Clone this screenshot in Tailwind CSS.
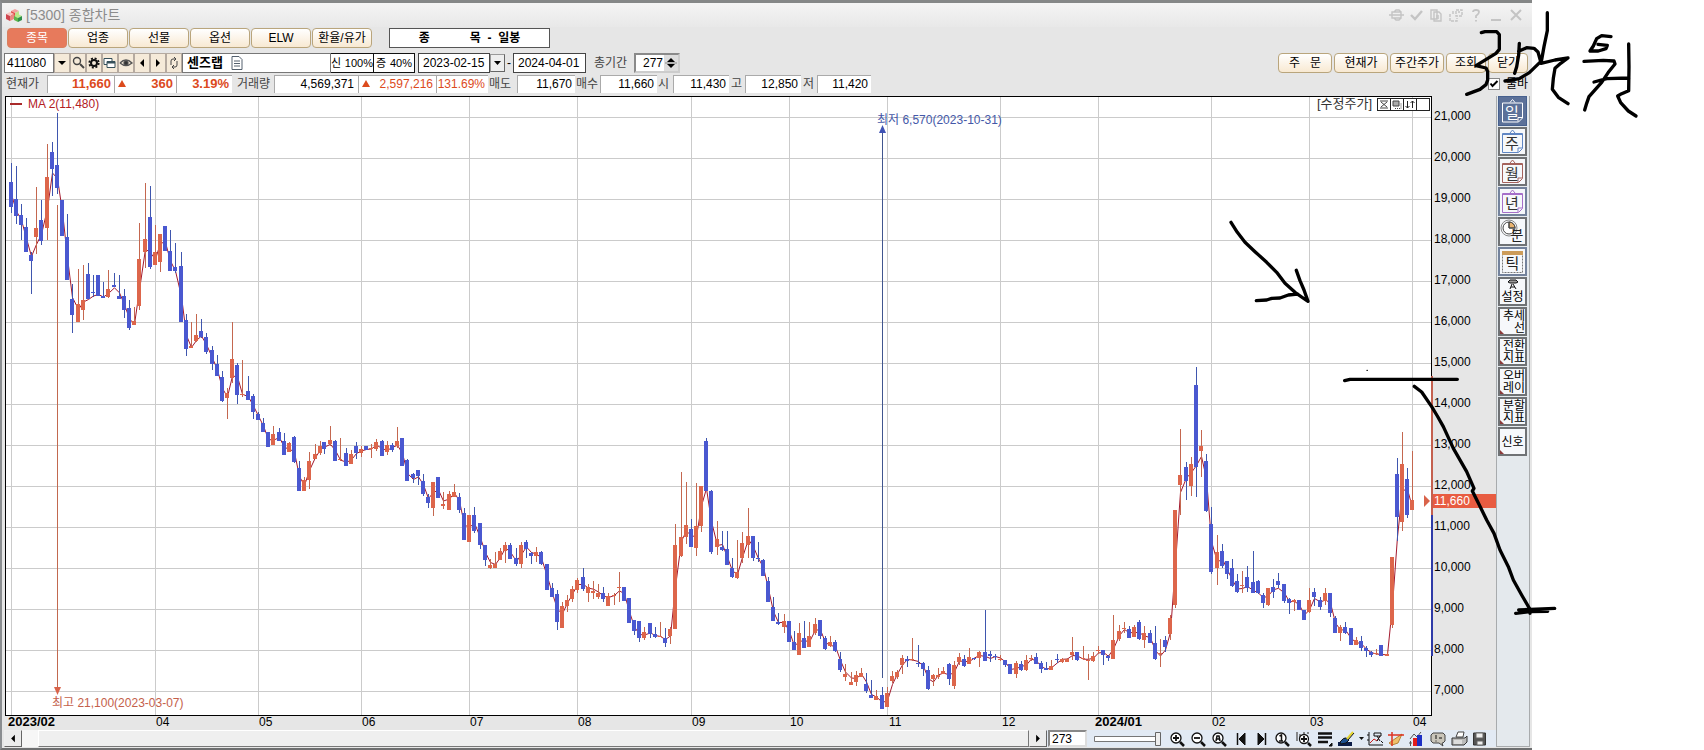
<!DOCTYPE html>
<html lang="ko">
<head>
  <meta charset="UTF-8">
  <meta name="viewport" content="width=device-width, initial-scale=1.0">
  <title>[5300] 종합차트</title>
  <script src="https://cdn.jsdelivr.net/npm/@tailwindcss/browser@4"></script>
</head>
<body class="bg-white text-black text-[12px] leading-4 font-['Liberation_Sans','Noto_Sans_CJK_KR',sans-serif]">

<div class="relative flex">
  <!-- Window -->
  <div class="flex-1 min-w-0 border-t-[3px] border-t-[#858787] border-l-2 border-l-[#8a8d90] border-b-2 border-b-[#6e6f70] bg-[#e6e6e6] pb-px">

    <!-- Title bar -->
    <header class="flex items-center justify-between h-6 pl-1 pr-2 bg-linear-to-b from-[#f4f4f4] to-[#e8e8e8] text-[#8c8c8c]">
      <div class="flex items-center gap-1">
        <svg class="w-4 h-4" viewBox="0 0 16 16">
          <path d="M5 4l4-2 4 2-4 2z" fill="#f3a3a0"/><path d="M5 4l4 2v5l-4-2z" fill="#e24d4a"/><path d="M9 6l4-2v4l-4 3z" fill="#bfe28d"/>
          <path d="M0 7l4-2 4 2-4 2z" fill="#f7c4bf"/><path d="M0 7l4 2v5l-4-2z" fill="#cf4650"/><path d="M4 9l4-2v5l-4 2z" fill="#e98882"/>
          <path d="M8 9l4-2 4 2-4 2z" fill="#b8ec8a"/><path d="M8 9l4 2v4l-4-2z" fill="#5db54a"/><path d="M12 11l4-2v4l-4 2z" fill="#2f8f4a"/>
        </svg>
        <h1 class="text-[14px]">[5300] 종합차트</h1>
      </div>
      <svg class="w-[135px] h-4" viewBox="0 0 135 16" fill="none" stroke="#c4c4c4" stroke-width="1.4">
        <path d="M3 5h9v6H3zM5 5l2-2h3l2 2M5 11l2 2h3l2-2M0 8h15"/>
        <path d="M22 8l4 4 7-8" stroke-width="2.4"/>
        <path d="M42 3h6v9h-6zM45 5h5l2 2v7h-7zM47 9h3M47 11h3"/>
        <path d="M67 3h6v6h-6zM61 7v7h7v-3M64 4v3M69 5h2" stroke-dasharray="3 1"/>
        <path d="M84 5q0-2 3-2t3 2q0 2-3 4v2M87 13v1.5" stroke-width="1.8"/>
        <path d="M102 13h10" stroke-width="2"/>
        <path d="M122 3l10 10M132 3L122 13" stroke-width="2"/>
      </svg>
    </header>

    <!-- Tabs -->
    <nav class="flex items-center gap-px h-5 mt-px pl-[5px] text-[12px]">
      <button class="w-[60px] h-5 rounded-sm border border-[#d9805f] bg-[#e77a5c] text-white">종목</button>
      <button class="w-[60px] h-5 rounded-sm border border-[#b9a57c] bg-linear-to-b from-white to-[#f8e9d2]">업종</button>
      <button class="w-[60px] h-5 rounded-sm border border-[#b9a57c] bg-linear-to-b from-white to-[#f8e9d2]">선물</button>
      <button class="w-[60px] h-5 rounded-sm border border-[#b9a57c] bg-linear-to-b from-white to-[#f8e9d2]">옵션</button>
      <button class="w-[60px] h-5 rounded-sm border border-[#b9a57c] bg-linear-to-b from-white to-[#f8e9d2]">ELW</button>
      <button class="w-[60px] h-5 rounded-sm border border-[#b9a57c] bg-linear-to-b from-white to-[#f8e9d2] whitespace-nowrap">환율/유가</button>
      <div class="flex items-center justify-center w-[161px] h-5 ml-4 border border-[#555] bg-white font-bold whitespace-pre">종            목  -  일봉</div>
    </nav>

    <!-- Search row -->
    <div class="flex items-center h-5 mt-[5px] pl-0.5 pr-1">
      <input aria-label="종목코드" value="411080" class="w-[50px] h-5 pl-0.5 border border-[#777] bg-white">
      <div class="flex text-[#333]">
        <button aria-label="목록" class="w-4 h-5 border border-[#b5aaa0] bg-[#f5ead9]"><svg class="w-full" viewBox="0 0 14 18"><path d="M3 7h8l-4 4z" fill="#000"/></svg></button>
        <button aria-label="검색" class="w-4 h-5 border border-[#b5aaa0] bg-[#f5ead9]"><svg class="w-full" viewBox="0 0 14 18" fill="none" stroke="#444"><circle cx="6" cy="7" r="3.5" stroke-width="1.4"/><path d="M9 10l4 4" stroke-width="2"/></svg></button>
        <button aria-label="설정" class="w-4 h-5 border border-[#b5aaa0] bg-[#f5ead9]"><svg class="w-full" viewBox="0 0 14 18" fill="none" stroke="#111"><circle cx="7" cy="9" r="3" stroke-width="2"/><circle cx="7" cy="9" r="4.7" stroke-width="1.8" stroke-dasharray="2 1.7"/></svg></button>
        <button aria-label="창" class="w-4 h-5 border border-[#b5aaa0] bg-[#f5ead9]"><svg class="w-full" viewBox="0 0 14 18" fill="#fff" stroke="#36505a"><path d="M1 4.500h8v6H1z"/><path d="M4 7.500h8v6H4z"/><path d="M4 8.500h8" stroke-width="2"/></svg></button>
        <button aria-label="보기" class="w-4 h-5 border border-[#b5aaa0] bg-[#f5ead9]"><svg class="w-full" viewBox="0 0 14 18" fill="none" stroke="#555"><path d="M1 9q6-6 12 0q-6 5-12 0" stroke-width="1.4"/><circle cx="7" cy="9" r="2.2" fill="#333"/></svg></button>
        <button aria-label="이전" class="w-4 h-5 border border-[#b5aaa0] bg-[#f5ead9]"><svg class="w-full" viewBox="0 0 14 18"><path d="M9 5v8L5 9z"/></svg></button>
        <button aria-label="다음" class="w-4 h-5 border border-[#b5aaa0] bg-[#f5ead9]"><svg class="w-full" viewBox="0 0 14 18"><path d="M5 5v8l4-4z"/></svg></button>
        <button aria-label="새로고침" class="w-4 h-5 border border-[#b5aaa0] bg-[#f5ead9]"><svg class="w-full" viewBox="0 0 14 18" fill="none" stroke="#444"><path d="M4 11V7q0-2 2-2h2M7 3l2 2-2 2M10 7v4q0 2-2 2H6M7 11l-2 2 2 2"/></svg></button>
      </div>
      <div class="flex items-center gap-2 w-[149px] h-5 pl-1 border border-[#777] bg-white font-bold text-[13px]">
        센즈랩
        <svg class="w-3 h-[14px]" viewBox="0 0 12 14" fill="#fff" stroke="#54606e"><path d="M1 .5h7l3 3v10H1z"/><path d="M3 5h6M3 7.500h6M3 10h6"/></svg>
      </div>
      <div class="flex items-center justify-between w-[42px] h-5 border-y border-[#111] bg-white whitespace-nowrap text-[11px]"><span>신</span><span>100%</span></div>
      <div class="flex items-center justify-between w-[42px] h-5 px-0.5 border border-[#111] bg-white whitespace-nowrap text-[11px]"><span>증</span><span>40%</span></div>
      <input aria-label="시작일" value="2023-02-15" class="w-[72px] h-5 ml-[3px] px-1 border border-[#444] bg-white">
      <button aria-label="시작일 선택" class="w-[15px] h-[18px] border border-r-[#666] border-b-[#666] border-[#999] bg-[#eee]"><svg class="w-full" viewBox="0 0 13 16"><path d="M3 6h7l-3.500 4z"/></svg></button>
      <span class="w-2 text-center">-</span>
      <input aria-label="종료일" value="2024-04-01" class="w-[73px] h-5 px-1 border border-[#444] bg-white">
      <label for="span" class="ml-2 w-10 text-[#444] whitespace-nowrap">총기간</label>
      <div class="flex w-[46px] h-5 border-2 border-[#8a8a8a] border-r-[#ccc] border-b-[#ccc] bg-white">
        <input id="span" value="277" class="min-w-0 flex-1 text-right bg-white">
        <svg class="w-[14px] h-4 ml-px bg-[#ddd]" viewBox="0 0 14 16"><path d="M3 7l4-4 4 4zM3 9h8l-4 4z"/><path d="M1 8h12" stroke="#888"/></svg>
      </div>
      <div class="flex gap-0.5 ml-auto text-[12px] whitespace-nowrap">
        <button class="w-[54px] h-5 rounded-sm border border-[#b9a57c] bg-linear-to-b from-white to-[#f8e9d2] whitespace-pre">주   문</button>
        <button class="w-[54px] h-5 rounded-sm border border-[#b9a57c] bg-linear-to-b from-white to-[#f8e9d2]">현재가</button>
        <button class="w-[54px] h-5 rounded-sm border border-[#b9a57c] bg-linear-to-b from-white to-[#f8e9d2]">주간주가</button>
        <button class="w-10 h-5 rounded-sm border border-[#b9a57c] bg-linear-to-b from-white to-[#f8e9d2]">조회</button>
        <button class="w-10 h-5 rounded-sm border border-[#b9a57c] bg-linear-to-b from-white to-[#f8e9d2]">닫기</button>
      </div>
    </div>

    <!-- Quote row -->
    <div class="flex items-center h-5 mt-px pl-1 pr-1 text-[#444] whitespace-nowrap">
      <span class="w-[41px]">현재가</span>
      <span class="w-[67px] h-[18px] pr-[3px] border-l border-t border-[#aaa] bg-white text-right font-bold text-[13px] text-[#dc4a1c]">11,660</span>
      <span class="flex justify-between w-[62px] h-[18px] px-[3px] border-l border-t border-[#aaa] bg-white font-bold text-[#dc4a1c]"><svg class="w-2 h-4" viewBox="0 0 8 16"><path d="M0 11h8L4 4z" fill="#dc4a1c"/></svg><span class="text-[13px]">360</span></span>
      <span class="w-14 h-[18px] pr-[3px] border-l border-t border-[#aaa] bg-white text-right font-bold text-[13px] text-[#dc4a1c]">3.19%</span>
      <span class="w-[42px] pl-[5px]">거래량</span>
      <span class="w-[84px] h-[18px] pr-1 border-l border-t border-[#aaa] bg-white text-right text-black">4,569,371</span>
      <span class="flex justify-between w-[78px] h-[18px] px-[3px] border-l border-t border-[#aaa] bg-white text-[#dc4a1c]"><svg class="w-2 h-4" viewBox="0 0 8 16"><path d="M0 11h8L4 4z" fill="#dc4a1c"/></svg>2,597,216</span>
      <span class="w-[52px] h-[18px] pr-[3px] border-l border-t border-[#aaa] bg-white text-right text-[#dc4a1c]">131.69%</span>
      <span class="w-[29px] pl-px">매도</span>
      <span class="w-[58px] h-[18px] pr-[3px] border-l border-t border-[#aaa] bg-white text-right text-black">11,670</span>
      <span class="w-[25px] pl-px">매수</span>
      <span class="w-[57px] h-[18px] pr-[3px] border-l border-t border-[#aaa] bg-white text-right text-black">11,660</span>
      <span class="w-4 pl-px">시</span>
      <span class="w-14 h-[18px] pr-[3px] border-l border-t border-[#aaa] bg-white text-right text-black">11,430</span>
      <span class="w-4 pl-0.5">고</span>
      <span class="w-14 h-[18px] pr-[3px] border-l border-t border-[#aaa] bg-white text-right text-black">12,850</span>
      <span class="w-4 pl-0.5">저</span>
      <span class="w-[54px] h-[18px] pr-[3px] border-l border-t border-[#aaa] bg-white text-right text-black">11,420</span>
      <label class="flex items-center gap-1.5 ml-auto text-black">
        <input type="checkbox" checked class="peer sr-only">
        <svg class="w-3 h-3 bg-white border border-[#888]" viewBox="0 0 10 10" fill="none" stroke="#000" stroke-width="2"><path d="M1.500 4.500l2 2.500 5-5"/></svg>
        툴바
      </label>
    </div>

    <!-- Chart, bottom bar and side toolbar -->
    <div class="flex items-stretch mt-0.5 pl-0.5 pr-0.5">
      <main class="flex-1 min-w-0">
        <svg id="chart" class="block w-full" viewBox="4 96 1492 634" font-size="12">
          <rect x="5" y="97" width="1427" height="619" fill="#fff"/>
          <g id="grid" stroke="#cbcbcb" shape-rendering="crispEdges"></g>
          <g shape-rendering="crispEdges">
            <path d="M57.500 205V688" stroke="#c2694f"/>
            <path d="M882.500 130V678" stroke="#41568f"/>
          </g>
          <path d="M54 687h7l-3.500 8z" fill="#d9634a"/>
          <path d="M879 133h7l-3.500-8z" fill="#3f52b4"/>
          <path id="ma" transform="scale(.33333)" fill="none" stroke="#a3182c" stroke-width="3"/>
          <g id="bars" transform="scale(.33333)" shape-rendering="crispEdges"></g>
          <path d="M10 104h12" stroke="#a92a2a" stroke-width="2"/>
          <text x="28" y="108" fill="#b3201f">MA 2(11,480)</text>
          <text x="877" y="124" fill="#4458a8">최저 6,570(2023-10-31)</text>
          <text x="52" y="707" fill="#c4604a">최고 21,100(2023-03-07)</text>
          <text x="1317" y="108" fill="#333" font-size="13">[수정주가]</text>
          <g fill="#fff" stroke="#222" shape-rendering="crispEdges">
            <path d="M1377.500 98.500h13v12h-13zM1390.500 98.500h13v12h-13zM1403.500 98.500h13v12h-13zM1416.500 98.500h13v12h-13z"/>
          </g>
          <path d="M1380 101h8M1380 108h8M1381 102l6 5M1387 102l-6 5" fill="none" stroke="#444"/>
          <path d="M1393 101h6v5h-6z" fill="#aaa" stroke="#444"/><path d="M1395 108.500h6v-6" fill="none" stroke="#444" stroke-dasharray="1 1"/>
          <path d="M1407.500 101v7l-2-2M1407.500 108l2-2M1412.500 108v-7l-2 2M1412.500 101l2 2" fill="none" stroke="#222"/>
          <rect x="5.500" y="96.500" width="1426" height="619" fill="none" stroke="#000"/>
          <path d="M1432 376v139" stroke="#c4604f" stroke-width="2"/>
          <path d="M1432 515v141" stroke="#2e3ba8" stroke-width="2"/>
          <path d="M1424 495l6 6-6 6z" fill="#d9634a"/>
          <rect x="1433" y="494" width="63" height="14" fill="#e85c41"/>
          <text x="1434" y="505" fill="#fff">11,660</text>
          <g id="prices"></g>
          <g id="months"></g>
        </svg>

        <!-- Scroll bar and tools -->
        <div class="flex items-center h-[17px] bg-[#e2eaf4]">
          <button aria-label="왼쪽" class="w-[18px] h-[17px] shrink-0 border border-[#eee] border-r-[#666] border-b-[#666] bg-[#ececec]"><svg class="w-full h-full" viewBox="0 0 16 16"><path d="M10 4v8L6 8z"/></svg></button>
          <div class="flex-1 h-[17px] pl-4 bg-[#f6f6f6]"><div class="h-[17px] border border-white border-r-[#777] border-b-[#777] bg-[#efefef]"></div></div>
          <button aria-label="오른쪽" class="w-[18px] h-[17px] shrink-0 border border-[#eee] border-r-[#666] border-b-[#666] bg-[#ececec]"><svg class="w-full h-full" viewBox="0 0 16 16"><path d="M6 4v8l4-4z"/></svg></button>
          <input aria-label="봉 개수" value="273" class="w-[39px] h-[17px] ml-px pl-0.5 border-2 border-[#888] border-r-[#ddd] border-b-[#ddd] bg-white">
          <svg class="w-[68px] h-4 ml-[7px] shrink-0" viewBox="0 0 68 16"><path d="M.5 5.500h66v5H.5z" fill="#fff" stroke="#777"/><path d="M61.500 1.500h5v13h-5z" fill="#eee" stroke="#666"/></svg>
          <svg class="w-[330px] h-4 shrink-0 ml-1" viewBox="1166 0 330 16" fill="none" stroke="#111">
            <g stroke-width="1.3">
              <circle cx="1176" cy="7" r="5" fill="#fff"/><path d="M1180 11l4 4" stroke-width="2.500"/><path d="M1173 7h6M1176 4v6" stroke-width="1.800"/>
              <circle cx="1197" cy="7" r="5" fill="#fff"/><path d="M1201 11l4 4" stroke-width="2.500"/><path d="M1194 7h6" stroke-width="1.800"/>
              <circle cx="1218" cy="7" r="5" fill="#fff"/><path d="M1222 11l4 4" stroke-width="2.500"/><path d="M1216 10l1-5h2l1 5M1216 8h4" stroke-width="1.500"/>
              <circle cx="1281" cy="7" r="5" fill="#fff"/><path d="M1285 11l4 4" stroke-width="2.500"/><path d="M1279.500 5l2-1v6M1279 10h4" stroke-width="1.500"/>
              <path d="M1297 1v9M1300 3v5M1304 1v3M1308 1v2" stroke="#555"/><circle cx="1304" cy="8" r="4.500" fill="#fff"/><path d="M1308 12l3 3" stroke-width="2.500"/><path d="M1301 8h6M1304 5v6" stroke-width="1.800"/>
            </g>
            <path d="M1237.500 2v12" stroke-width="1.500"/><path d="M1245 2v12l-6-6z" fill="#111"/>
            <path d="M1265.500 2v12" stroke-width="1.500"/><path d="M1258 2v12l6-6z" fill="#111"/>
            <path d="M1318 2.500h14M1318 6.500h14M1318 11h10" stroke-width="2.500"/><path d="M1329 15h3v-3z" fill="#111"/>
            <path d="M1338 15h14v-4h-14z" fill="#0a1c48" stroke="none"/><path d="M1340 11q4-5 6-4l3 2q-2 4-8 4z" fill="#1b4f8f"/><path d="M1347 8l6-7" stroke="#e3d52f" stroke-width="2"/><path d="M1348 9l6-7"/>
            <path d="M1359 6h5l-2.500 3z" fill="#111" stroke="none"/>
            <path d="M1369 1v13h14M1369 4h-2M1369 9h-2" /><path d="M1370 12l4-4 3 2 3-5" stroke="#c22"/><path d="M1374 2h7v3h-7zM1377 5l3 5M1380 5l-3 5M1381 10l2 2"/>
            <path d="M1389 12l13-9-4 9-6 2z" fill="#efc06b" stroke="#b78336"/><path d="M1392 1v14M1388 4h16" stroke="#d32" stroke-width="1.500"/>
            <path d="M1410 8l4-5 3 3 4-5" stroke="#555"/><path d="M1413 7h4v8h-4z" fill="#e21c1c" stroke="none"/><path d="M1417 4h5v11h-5z" fill="#1d2fc4" stroke="none"/><path d="M1409 12h3M1410.500 10v5" stroke="#555"/>
            <path d="M1433 2h10l2 2v6l-2 2h-1l1 3-4-3h-6l-2-2V4z" fill="#c9c5ba" stroke="#444"/><path d="M1436 4v4M1436 9.500v1M1439 7h3"/>
            <path d="M1456 6l2-5h6l-1 5z" fill="#fff" stroke="#444"/><path d="M1452 7h13l2-2v6l-3 3h-12z" fill="#bbb" stroke="#333"/><path d="M1454 10h8M1454 12h8" stroke="#fff"/>
            <path d="M1473.500 2h12v12h-12z" fill="#555" stroke="#333"/><path d="M1476 2h7v5h-7zM1477 10h6v4h-6z" fill="#eee" stroke="#666"/>
          </svg>
        </div>
      </main>

      <!-- Side toolbar -->
      <aside class="flex flex-col gap-px w-[34px] pl-px pr-0.5 border-x border-b border-[#a8abad] bg-[#e4e9ed] text-[12px] leading-3">
        <button class="h-[30px] border border-[#46608e] bg-[#5c7199]"><svg class="w-full h-full" viewBox="1 0 27 27" fill="none" stroke="#fff"><path d="M4.500 5.500h20v15l-4 4h-16zM24 20h-4v4M12 5l2.500-3L17 5"/><text x="14" y="20" font-size="15" text-anchor="middle" fill="#fff" stroke="none">일</text></svg></button>
        <button class="h-[29px] border-2 border-[#6f7275] bg-[#f6f8fb]"><svg class="w-full h-full" viewBox="2 1 25 25" fill="none" stroke="#5f86c4"><path d="M4.500 5.500h20v15l-4 4h-16zM24 20h-4v4M12 5l2.500-3L17 5M4 6.500h21"/><text x="14" y="21" font-size="15" text-anchor="middle" fill="#333" stroke="none">주</text></svg></button>
        <button class="h-[29px] border-2 border-[#6f7275] bg-[#f6f8fb]"><svg class="w-full h-full" viewBox="2 1 25 25" fill="none" stroke="#a4625c"><path d="M4.500 5.500h20v15l-4 4h-16zM24 20h-4v4M12 5l2.500-3L17 5M4 6.500h21"/><text x="14" y="21" font-size="15" text-anchor="middle" fill="#333" stroke="none">월</text></svg></button>
        <button class="h-[29px] border-2 border-[#73829c] bg-[#f6f8fb]"><svg class="w-full h-full" viewBox="2 1 25 25" fill="none" stroke="#a56fc9"><path d="M4.500 5.500h20v15l-4 4h-16zM24 20h-4v4M12 5l2.500-3L17 5M4 6.500h21"/><text x="14" y="21" font-size="15" text-anchor="middle" fill="#333" stroke="none">년</text></svg></button>
        <button class="h-[29px] border-2 border-[#6f7275] bg-[#f6f8fb]"><svg class="w-full h-full" viewBox="2 1 25 25" fill="none" stroke="#444"><circle cx="11" cy="10" r="8" stroke="#888"/><circle cx="11" cy="10" r="6" fill="#fff"/><path d="M11 10V4a6 6 0 0 1 6 6z" fill="#e9b36f"/><path d="M11 10v-6M11 10h5"/><text x="19" y="22" font-size="14" text-anchor="middle" fill="#222" stroke="none">분</text></svg></button>
        <button class="h-[29px] border-2 border-[#73829c] bg-[#f6f8fb]"><svg class="w-full h-full" viewBox="2 1 25 25" fill="none" stroke="#777"><path d="M4.500 3.500h20v21h-20z" stroke-dasharray="2 1"/><path d="M4 5h21" stroke="#cc9c5a" stroke-width="4"/><text x="14.500" y="21" font-size="15" text-anchor="middle" fill="#222" stroke="none">틱</text></svg></button>
        <button class="flex flex-col items-center h-[29px] border-2 border-[#6f7275] bg-[#f6f8fb]"><svg class="w-3 h-3 shrink-0" viewBox="0 0 12 12" fill="#999" stroke="#111"><path d="M1 3l2-2h6l2 2-2 1H3zM5 5l-2 5M6 5l3 5M4 8h4"/></svg>설정</button>
        <button class="relative h-[29px] border-2 border-[#6f7275] bg-[#f6f8fb] text-right">추세<br>선<span class="absolute left-0 bottom-0 border-t-4 border-t-transparent border-l-4 border-l-[#8b3a3a]"></span></button>
        <button class="relative h-[29px] border-2 border-[#6f7275] bg-[#f6f8fb] text-right">전환<br>지표<span class="absolute left-0 bottom-0 border-t-4 border-t-transparent border-l-4 border-l-[#8b3a3a]"></span></button>
        <button class="relative h-[29px] border-2 border-[#6f7275] bg-[#f6f8fb] text-right">오버<br>레이<span class="absolute left-0 bottom-0 border-t-4 border-t-transparent border-l-4 border-l-[#8b3a3a]"></span></button>
        <button class="relative h-[29px] border-2 border-[#6f7275] bg-[#f6f8fb] text-right">분할<br>지표<span class="absolute left-0 bottom-0 border-t-4 border-t-transparent border-l-4 border-l-[#8b3a3a]"></span></button>
        <button class="relative h-[29px] border-2 border-[#6f7275] bg-[#f6f8fb] text-center">신호<span class="absolute left-0 bottom-0 border-t-4 border-t-transparent border-l-4 border-l-[#8b3a3a]"></span></button>
      </aside>
    </div>
  </div>

  <!-- Free space right of the window -->
  <div class="w-[172px] shrink-0"></div>

  <!-- Pen notes -->
  <svg class="absolute left-0 top-0 w-full pointer-events-none" viewBox="0 0 1704 750" fill="none" stroke="#000" stroke-linecap="round" stroke-linejoin="round">
    <g transform="translate(1240 0) scale(.33333)" stroke-width="10">
      <path d="M724 98L735 95H770L778 104V148L768 160 708 197 738 204 743 215V240L738 254 720 268 680 283"/>
      <path d="M838 130L836 165 830 200 824 220M836 154L860 143 882 145 894 156 902 185 868 218 838 236 795 243M922 38V92L912 140 903 190M903 190L945 180 984 174 962 190 945 205 940 235 937 268 955 292 984 311"/>
      <path d="M1113 110L1085 107 1070 116 1060 138 1050 153 1075 153 1098 146 1102 136 1074 133M1032 184L1090 181 1122 183 1125 192 1105 217 1085 247 1047 290 1040 310 1034 330M1062 246L1100 236 1167 234M1166 132L1167 200 1166 272 1145 281 1133 288 1142 308 1165 333 1188 348"/>
    </g>
    <g transform="translate(1200 200) scale(.33333)" stroke-width="10">
      <path d="M93 67L112 97 135 127 165 155 200 187 230 217 255 250 285 277 322 303M289 211L300 242 312 270 324 304M169 302L200 300 215 295 240 294 265 285 292 282"/>
      <path d="M434 542L450 538H772M643 559L665 576 695 620 712 648 730 680 760 745 800 815 822 865 817 873 838 915 860 960 882 1000 900 1050 925 1100 940 1140 965 1185 990 1228V1240"/>
      <path d="M947 1240L990 1235 1043 1234M956 1230L1064 1225"/>
      <path d="M501 511h1" stroke-width="4"/>
    </g>
  </svg>
</div>

<script>
  // 봉: x, 고가, 몸통 위, 몸통 아래, 저가, 방향 (1/3픽셀 단위, 구간별 원점)
  const segments = [
    { dx: 0, dy: 270, rows: `34 220 277 350 368 d|49 228 327 377 401 d|64 342 375 404 449 d|79 385 411 486 486 d|94 486 495 513 611 d|109 291 414 440 491 u|124 330 390 452 464 d|142 162 261 413 450 u|157 156 186 237 317 d|172 69 225 294 311 d|187 330 330 437 437 d|202 372 441 570 570 d|217 583 627 675 728 d|234 537 642 696 696 u|250 525 630 660 689 u|265 519 552 627 627 d|280 556 606 609 621 d|294 555 555 618 618 d|310 576 619 624 624 d|325 540 597 620 624 u|343 549 585 590 590 d|358 556 618 627 627 d|373 598 618 660 683 d|388 630 654 713 720 d|402 651 693 705 705 u|417 400 507 647 660 u|436 279 447 486 533 u|451 288 381 530 536 d|466 405 486 525 525 u|481 432 432 516 545 u|495 408 408 483 483 d|511 420 483 543 543 d|526 459 531 543 549 d|543 486 528 696 696 d|559 672 690 777 797 d|573 696 768 773 773 u|589 672 735 753 757 u|603 688 723 741 745 d|619 729 741 786 791 d|637 768 780 822 839 d|651 795 822 858 858 d|666 843 861 933 936 d|682 894 909 923 987 u|697 696 807 863 880 u|712 819 825 914 941 d|727 810 911 914 921 u|744 858 903 930 930 d|760 912 918 966 986 d|774 966 972 990 990 d|790 984 999 1026 1026 d|804 1026 1026 1070 1070 d|819 1008 1032 1064 1064 u` },
    { dx: 840, dy: 960, rows: `-3 324 336 362 364 d|12 339 363 404 404 d|27 366 369 396 396 u|42 348 351 426 429 d|57 423 444 513 513 d|72 472 480 513 513 u|88 397 423 480 506 u|106 373 402 417 417 u|121 363 377 399 405 u|134 366 366 386 401 d|151 318 360 372 377 u|166 360 363 423 423 d|181 354 417 420 423 u|198 384 399 437 437 d|213 390 402 431 431 u|229 366 378 399 416 d|243 378 387 399 411 u|259 378 378 390 390 d|274 372 384 388 413 u|288 357 366 386 393 u|306 360 363 407 407 d|321 363 375 396 404 u|337 369 375 389 397 d|352 321 363 378 383 u|366 354 354 437 437 d|381 417 420 483 483 d|399 459 462 474 488 d|414 450 450 467 494 d|430 462 483 522 527 d|444 522 531 549 563 d|459 486 486 563 587 u|474 471 471 534 534 d|489 516 552 558 566 u|507 513 522 570 570 u|523 492 516 530 530 u|537 519 531 570 580 d|552 564 579 660 660 d|567 585 585 666 666 u|583 561 585 633 638 d|600 609 609 675 686 d|615 675 675 720 738 d|630 717 735 745 747 u|645 696 732 744 744 u|660 684 693 720 720 u|676 666 675 693 728 u|690 669 675 717 717 d|708 684 714 732 738 d|723 666 675 732 743 u|738 660 666 687 713 d|753 696 699 708 731 d|769 681 696 708 725 u|783 693 696 732 734 d|801 732 732 810 810 d|816 789 804 831 831 d|831 810 822 905 930 d|846 846 858 923 923 u` },
    { dx: 1680, dy: 1260, rows: `21 525 540 558 576 u|37 498 507 537 546 u|51 474 480 510 519 u|69 444 471 507 513 d|85 492 502 519 545 u|100 483 513 519 537 u|115 492 519 531 536 u|130 501 519 537 546 d|144 519 528 557 557 u|163 519 525 529 555 u|178 456 500 503 546 u|192 501 501 543 543 d|207 534 534 608 608 d|222 600 600 633 644 d|237 603 603 654 665 d|253 621 636 654 660 u|270 609 609 642 653 d|286 621 641 651 654 d|301 606 648 651 651 u|316 624 654 669 681 d|330 621 627 648 671 u|345 312 375 627 627 u|363 156 351 408 411 u|378 186 315 351 372 u|393 297 327 381 381 d|408 189 318 384 407 u|423 198 198 318 335 u|438 54 63 213 213 d|453 210 213 396 401 d|472 303 357 381 404 u|487 333 381 390 392 d|501 333 387 434 434 d|516 414 444 471 473 d|531 360 456 474 476 u|547 336 369 413 428 u|565 264 348 375 414 u|579 348 348 414 423 d|595 366 414 417 425 d|609 417 420 468 468 d|624 471 483 546 546 d|639 531 561 603 603 d|655 579 605 612 615 d|673 582 603 621 638 u|687 603 603 666 666 d|703 633 666 690 690 d|717 609 639 705 705 u|733 603 654 684 684 d|748 606 648 681 681 u|766 594 612 639 645 u|780 600 600 648 658 d|796 648 654 687 691 d|811 648 666 678 680 u|825 660 666 693 695 d|841 696 717 750 755 d|855 732 762 771 783 u|873 756 786 795 795 u|888 753 765 785 797 u` },
    { dx: 2550, dy: 1800, rows: `33 204 219 231 231 u|48 219 252 273 278 d|64 240 285 294 294 d|79 270 288 299 300 u|96 261 285 326 326 d|111 261 279 321 321 u|126 213 228 243 250 u|141 210 216 231 237 u|156 165 174 195 221 u|172 168 177 183 200 d|187 114 177 180 183 u|205 135 189 192 200 d|220 186 190 206 228 d|234 198 210 267 270 d|250 222 225 237 258 u|265 204 225 230 236 u|280 201 213 222 222 u|297 189 192 237 254 d|312 183 195 258 266 u|328 158 171 186 195 u|343 165 177 198 201 d|358 144 171 191 191 u|374 173 174 177 180 d|388 153 156 174 200 u|405 30 156 183 183 d|421 153 163 168 185 d|435 162 168 171 180 d|451 166 177 180 183 u|465 179 180 195 201 d|480 192 192 222 222 d|499 183 189 222 234 u|515 183 192 210 213 d|529 165 180 209 213 u|544 165 174 178 183 u|559 159 171 192 192 d|574 183 189 207 218 d|589 186 204 209 209 d|605 180 198 209 209 u|622 162 176 179 188 d|637 174 177 185 188 u|652 174 177 186 186 u|667 111 156 165 179 u|681 156 156 180 182 d|700 138 175 178 180 u|715 162 181 184 240 u|729 156 168 183 186 u|745 138 150 153 162 u|760 150 150 164 195 d|775 165 168 174 183 d|789 45 120 177 177 u|807 75 93 117 123 u|823 66 84 87 98 u` },
    { dx: 3360, dy: 1020, rows: `27 857 866 893 893 d|42 855 861 890 890 u|57 840 846 896 900 d|73 858 879 899 923 u|90 870 879 908 908 d|105 858 909 956 960 d|121 897 940 943 981 u|135 888 900 920 935 d|150 825 834 882 900 u|165 510 510 795 803 u|180 267 405 434 525 u|199 366 381 423 479 d|213 351 372 437 467 u|228 81 135 381 471 d|244 270 318 333 410 u|259 342 363 513 516 d|273 500 552 696 701 d|292 585 636 684 735 u|307 612 633 678 683 d|321 663 663 702 716 d|337 657 684 738 740 d|351 702 723 756 758 d|367 693 735 739 759 u|381 678 711 744 756 d|400 633 726 759 759 d|414 720 723 759 761 d|430 759 765 789 804 d|444 744 744 795 797 u|460 717 741 755 774 d|475 699 723 735 743 d|492 732 732 783 789 d|508 774 777 788 822 d|523 777 780 786 812 u|537 780 780 810 810 d|552 810 810 840 840 d|567 744 780 816 819 u|583 744 756 771 797 d|600 771 780 801 811 d|615 744 759 783 794 u|630 759 759 819 831 d|645 828 834 879 879 d|660 855 861 878 902 u|676 846 861 878 881 d|693 864 864 915 915 d|708 891 900 914 914 u|724 888 903 923 933 d|738 918 923 932 950 d|753 933 936 944 950 d|769 927 940 943 944 u|783 915 915 947 947 d|801 933 942 948 948 u|816 651 651 855 864 u|831 354 402 531 603 d|846 276 372 546 572 u|861 384 417 525 533 d|876 333 480 510 510 u` }
  ];

  let bars = '', points = [], prev = null;
  segments.forEach(seg => {
    seg.rows.split('|').forEach(row => {
      const p = row.split(' ');
      const x = Math.floor((+p[0] + seg.dx) / 3) * 3;
      const [high, top, bottom, low] = p.slice(1, 5).map(v => +v + seg.dy);
      const up = p[5] === 'u';
      const color = up ? '#dd664b' : '#4a58d0';
      bars += `<rect x="${x}" y="${high}" width="3" height="${low - high}" fill="${up ? '#c4674f' : '#3f56ae'}"/>`;
      bars += `<rect x="${x - 6}" y="${top}" width="12" height="${Math.max(bottom - top, 3)}" fill="${color}"/>`;
      const close = up ? top : bottom;
      points.push(`${x + 1.5} ${prev === null ? (top + bottom) / 2 : (prev + close) / 2}`);
      prev = close;
    });
  });
  document.getElementById('bars').innerHTML = bars;
  document.getElementById('ma').setAttribute('d', 'M' + points.join('L'));

  // 격자와 가격 눈금
  let grid = '', prices = '';
  for (let i = 0; i < 15; i++) {
    const y = 117 + i * 41;
    grid += `<path d="M6 ${y}.5H1431"/>`;
    const price = (21 - i) + ',000';
    prices += `<text x="1434" y="${y + 3}">${price}</text>`;
  }

  const months = [[11, '2023/02', 8], [155, '04', 156], [258, '05', 259], [361, '06', 362], [469, '07', 470], [577, '08', 578], [691, '09', 692], [789, '10', 790], [887, '11', 889], [1000, '12', 1002], [1098, '2024/01', 1095], [1211, '02', 1212], [1309, '03', 1310], [1412, '04', 1413]];
  let labels = '';
  months.forEach(([x, name, tx]) => {
    grid += `<path d="M${x}.5 97V715"/>`;
    labels += `<text x="${tx}" y="726"${name.length > 2 ? ' font-weight="bold" font-size="13"' : ''}>${name}</text>`;
  });
  document.getElementById('grid').innerHTML = grid;
  document.getElementById('prices').innerHTML = prices;
  document.getElementById('months').innerHTML = labels;
</script>

</body>
</html>
